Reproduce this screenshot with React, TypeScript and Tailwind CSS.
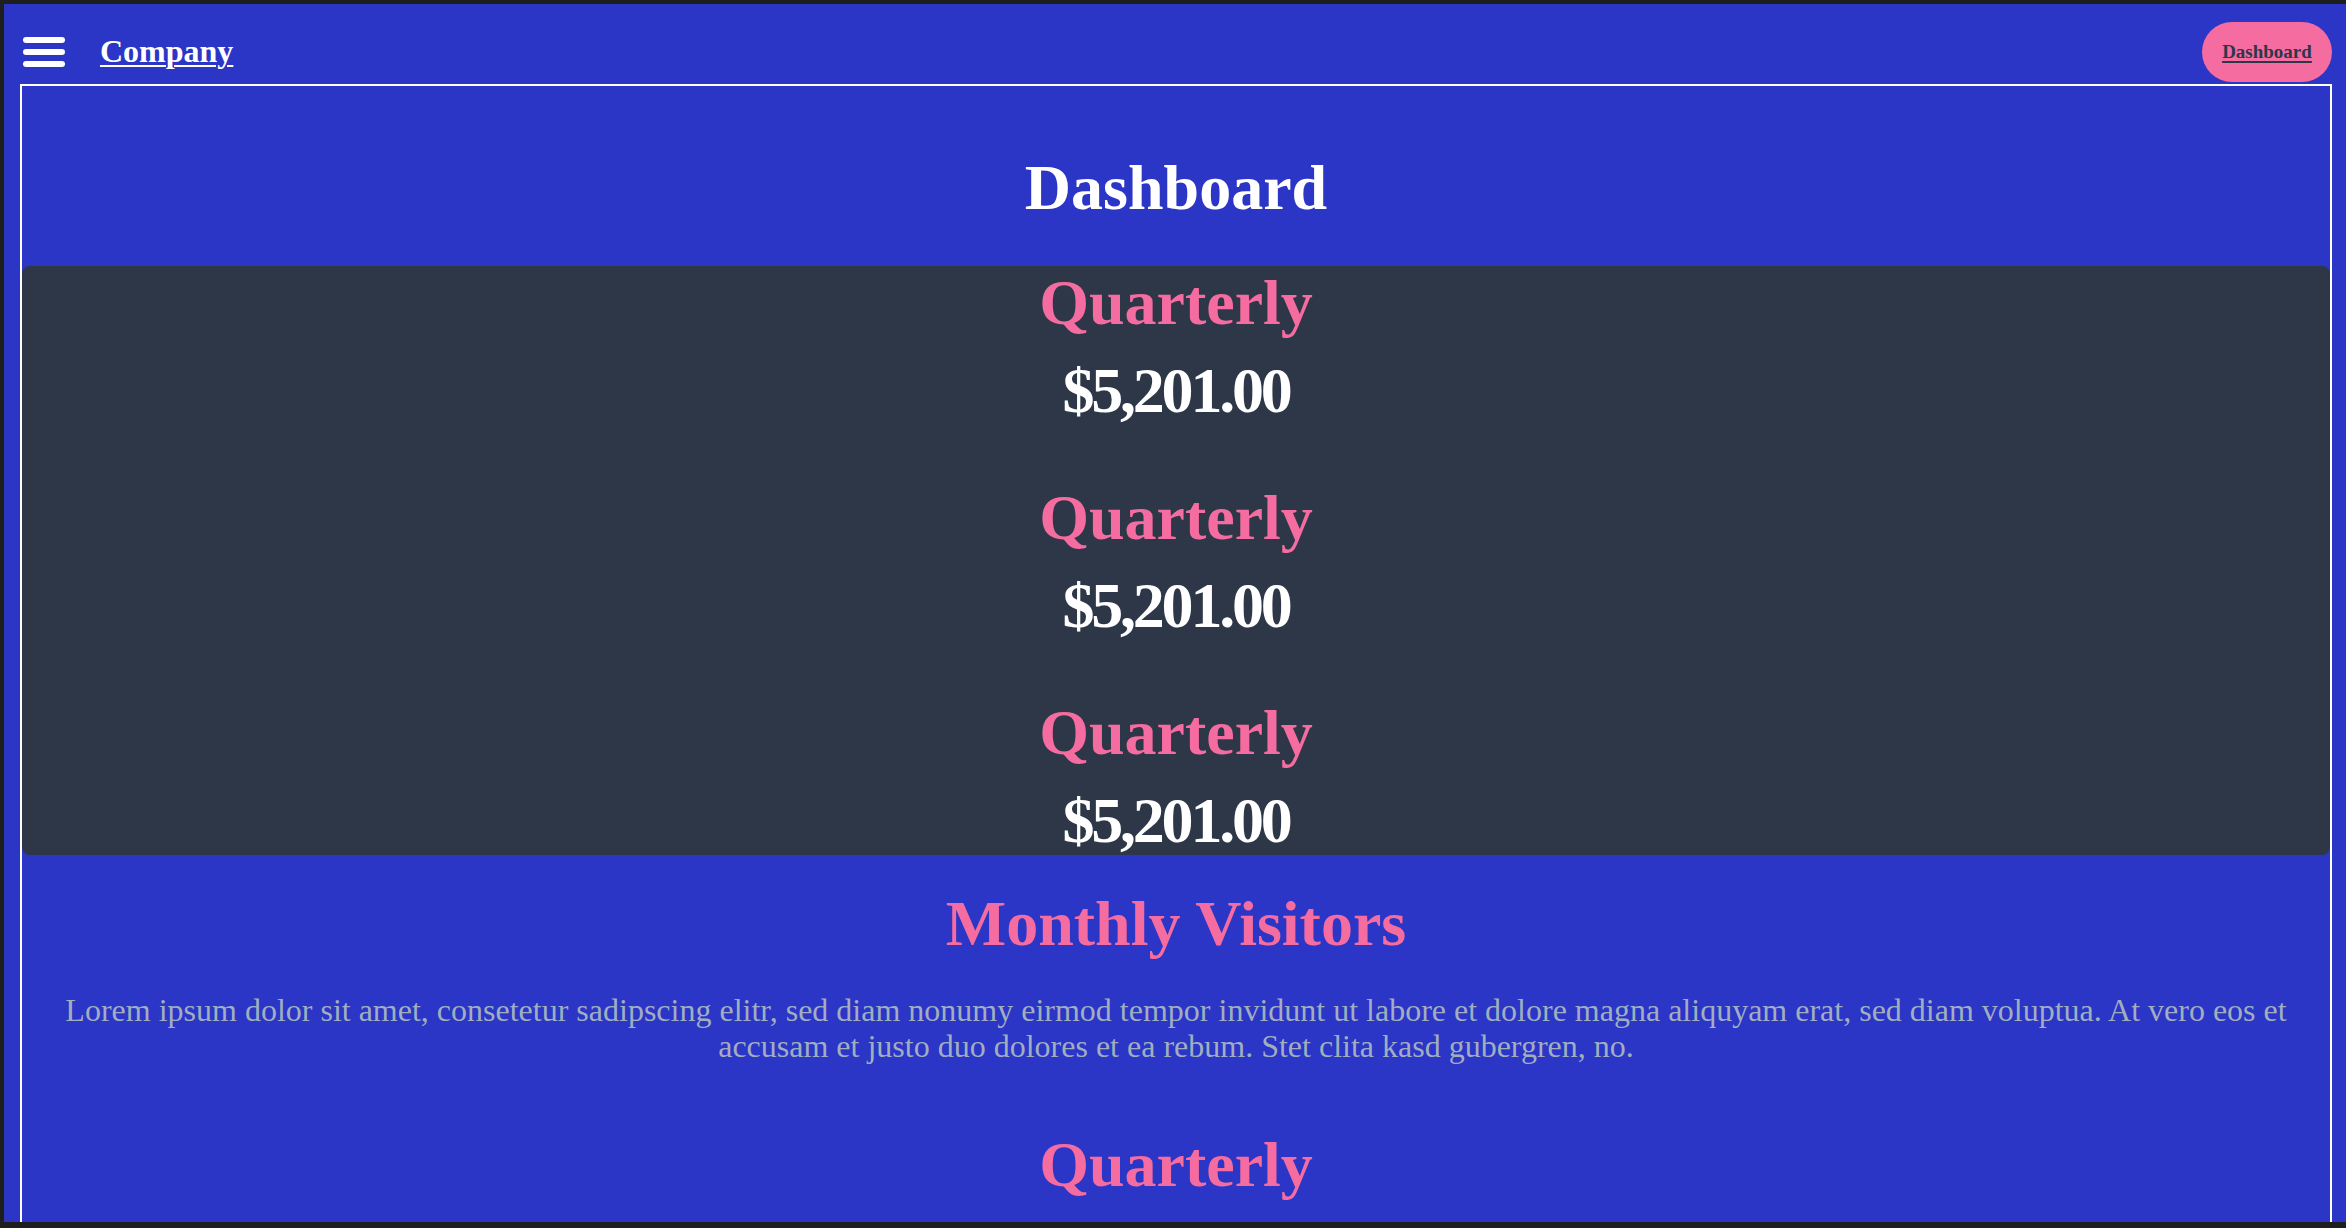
const items = [1, 2, 3];

const Stat = () => {
  return (
    <div className="flex flex-col items-center">
      <h3 className="text-[64px] leading-[74px] font-bold text-[#f46ca0]">Quarterly</h3>
      <p className="mt-[16px] text-[64px] leading-[69px] font-bold tracking-tighter text-white">$5,201.00</p>
    </div>
  );
};

const App = () => {
  return (
    <div className="h-screen w-full overflow-hidden bg-[#1e1e1e] pt-[4px] pl-[4px] pb-[6px] font-['Liberation_Serif','Times_New_Roman',serif]">
      <div className="h-full bg-[#2b35c6] flex flex-col overflow-hidden">
        <header className="pt-[18px] pb-[2px] pl-[19px] pr-[14px]">
          <div className="h-[60px] flex items-center justify-between">
            <div className="flex items-center gap-[35px]">
              <button className="flex flex-col gap-[6.5px] w-[42px] cursor-pointer">
                <span className="block h-[5.5px] w-full rounded-full bg-white"></span>
                <span className="block h-[5.5px] w-full rounded-full bg-white"></span>
                <span className="block h-[5.5px] w-full rounded-full bg-white"></span>
              </button>
              <a href="#" className="-mt-[2px] text-[32px] font-bold text-white underline underline-offset-[3px] decoration-[2px] leading-none">
                Company
              </a>
            </div>
            <a
              href="#"
              className="h-[60px] w-[130px] rounded-full bg-[#f46ca0] flex items-center justify-center text-[19px] font-bold text-[#2d3748] underline decoration-[2px] underline-offset-[3px]"
            >
              Dashboard
            </a>
          </div>
        </header>

        <main className="ml-[16px] mr-[14px] border-2 border-b-0 border-white flex flex-col text-center">
          <h1 className="pt-[66px] text-[64px] leading-[72px] font-bold text-white">Dashboard</h1>

          <section className="mt-[42px] bg-[#2d3748] rounded-lg flex flex-col gap-[56px]">
            {items.map((i) => (
              <Stat key={i} />
            ))}
          </section>

          <section className="mt-[33px] flex flex-col items-center">
            <h2 className="text-[64px] leading-[72px] font-bold text-[#f46ca0]">Monthly Visitors</h2>
            <p className="mt-[32px] px-[34px] text-[32px] leading-[36px] text-[#a0aec0]">
              Lorem ipsum dolor sit amet, consetetur sadipscing elitr, sed diam nonumy eirmod tempor invidunt ut labore et dolore magna aliquyam erat, sed diam voluptua. At vero eos et accusam et justo duo dolores et ea rebum. Stet clita kasd gubergren, no.
            </p>
          </section>

          <section className="mt-[64px] flex flex-col gap-[56px]">
            <Stat />
            <Stat />
          </section>
        </main>
      </div>
    </div>
  );
};

export default App;
